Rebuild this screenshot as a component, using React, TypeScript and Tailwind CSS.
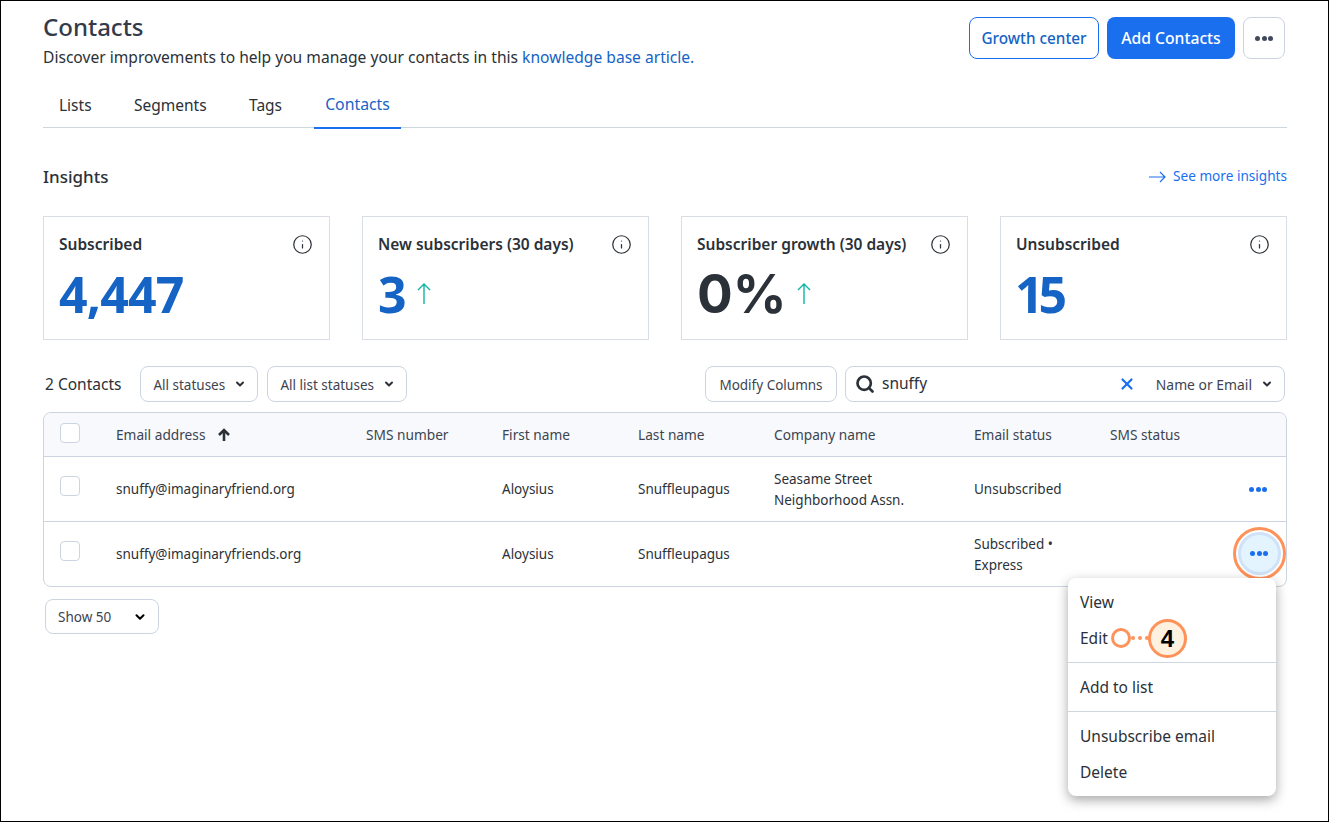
import { ChevronDown, Info, Search, X } from 'lucide-react'

const font = { fontFamily: '"Noto Sans", sans-serif' }

const insights = [
  { title: 'Subscribed', value: '4,447', valueClass: 'text-[50px] text-[#1563c4] tracking-[-0.8px]', arrow: false },
  { title: 'New subscribers (30 days)', value: '3', valueClass: 'text-[50px] text-[#1563c4]', arrow: true },
  { title: 'Subscriber growth (30 days)', value: '0%', valueClass: "font-['Inter'] text-[53px] text-[#2b3138]", arrow: true },
  { title: 'Unsubscribed', value: '15', valueClass: 'text-[50px] -ml-px text-[#1563c4] tracking-[-5px]', arrow: false },
]

const rowGrid = 'grid grid-cols-[56px_250px_136px_136px_136px_200px_136px_1fr] items-center pl-[16px] pr-[19px]'

function Dots({ className }: { className: string }) {
  return (
    <span className={`flex gap-[1.5px] ${className}`}>
      <span className="h-[5px] w-[5px] rounded-full bg-current" />
      <span className="h-[5px] w-[5px] rounded-full bg-current" />
      <span className="h-[5px] w-[5px] rounded-full bg-current" />
    </span>
  )
}

function Checkbox() {
  return <div className="h-5 w-5 rounded-[4px] border border-[#ccd4e2] bg-white" />
}

function Filter({ label, className }: { label: string; className: string }) {
  return (
    <div className={`flex h-9 items-center justify-between rounded-lg border border-[#ccd4e2] pl-[12px] pr-[11px] text-[13.5px] text-[#3d4450] ${className}`}>
      <span className="pt-[2px]">{label}</span>
      <ChevronDown className="h-3 w-3 text-[#2b3138]" strokeWidth={4} />
    </div>
  )
}

function Row({ email, company, status }: { email: string; company: React.ReactNode; status: React.ReactNode }) {
  return (
    <div className={`${rowGrid} h-[65px] border-t border-[#ccd4e2] text-[13.5px] leading-[21px] text-[#2b3138]`}>
      <div className="-mt-[6px]"><Checkbox /></div>
      <div>{email}</div>
      <div />
      <div>Aloysius</div>
      <div>Snuffleupagus</div>
      <div>{company}</div>
      <div>{status}</div>
      <div />
    </div>
  )
}

export default function App() {
  return (
    <div style={font} className="relative h-[822px] w-[1329px] overflow-hidden border border-black bg-white text-[#2b3138]">
      <div className="pl-[42px] pr-[41px]">
        <div className="flex h-[75px] items-start justify-between pt-[15px]">
          <div>
            <h1 className="text-[24px] font-medium leading-[22px] text-[#333b4a]">Contacts</h1>
            <p className="mt-[7px] text-[15.6px] leading-[24px]">
              Discover improvements to help you manage your contacts in this{' '}
              <span className="text-[#1563c4]">knowledge base article.</span>
            </p>
          </div>
          <div className="mr-[2px] mt-px flex gap-2">
            <div className="flex h-[42px] w-[130px] items-center justify-center rounded-lg border border-[#1a6fef] pt-px text-[15.3px] font-medium text-[#1563c4]">Growth center</div>
            <div className="flex h-[42px] w-[128px] items-center justify-center rounded-lg bg-[#1a6fef] pt-px text-[15.7px] font-medium text-white">Add Contacts</div>
            <div className="flex h-[42px] w-[42px] items-center justify-center rounded-lg border border-[#ccd4e2]"><Dots className="text-[#414a5c]" /></div>
          </div>
        </div>

        <div className="flex h-[52px] border-b border-[#ccd6de] pl-[16px] text-[15.5px]">
          <div className="flex h-[52px] w-[75px] items-center pt-[8px]">Lists</div>
          <div className="flex h-[52px] w-[115px] items-center pt-[8px]">Segments</div>
          <div className="flex h-[52px] w-[65px] items-center pt-[8px]">Tags</div>
          <div className="-mb-px flex h-[53px] w-[87px] items-center justify-center border-b-2 border-[#1a6fef] pt-[6px] text-[15.8px] text-[#1563c4]">Contacts</div>
        </div>

        <div className="flex h-[88px] items-center justify-between pt-[10px]">
          <h2 className="text-[17px] font-medium">Insights</h2>
          <div className="flex items-center gap-[7px] text-[13.6px] text-[#1a6fef]">
            <svg width="17" height="12" viewBox="0 0 17 12" fill="none" stroke="currentColor" strokeWidth="1.2">
              <path d="M0 6h16M11 1l5 5-5 5" />
            </svg>
            <span className="-mt-px">See more insights</span>
          </div>
        </div>

        <div className="grid grid-cols-4 gap-8">
          {insights.map(card => (
            <div key={card.title} className="h-[124px] border border-[#d9dde6] px-[15px] pt-[16px]">
              <div className="flex items-center justify-between pr-px">
                <span className="text-[15.5px] font-semibold leading-[22px]">{card.title}</span>
                <Info className="h-[21px] w-[21px]" strokeWidth={1.4} />
              </div>
              <div className="mt-[14px] flex items-center gap-[10px]">
                <span className={`font-bold leading-[50px] ${card.valueClass}`}>{card.value}</span>
                {card.arrow && (
                  <svg width="14" height="21" viewBox="0 0 14 21" fill="none" stroke="#0db5a6" strokeWidth="1.4" className="-mt-[1px]">
                    <path d="M7 21V1M1 7l6-6 6 6" />
                  </svg>
                )}
              </div>
            </div>
          ))}
        </div>

        <div className="mt-[26px] flex h-9 items-center pl-[2px] pr-[2px]">
          <span className="mr-[19px] pt-[2px] text-[15.5px]">2 Contacts</span>
          <Filter label="All statuses" className="w-[118px]" />
          <Filter label="All list statuses" className="ml-[9px] w-[140px]" />
          <div className="ml-auto flex h-9 w-[132px] items-center justify-center rounded-lg border border-[#ccd4e2] pt-[2px] text-[13.5px] text-[#3d4450]">Modify Columns</div>
          <div className="ml-2 flex h-9 w-[440px] items-center rounded-lg border border-[#ccd4e2] pl-[9px] pr-[11px]">
            <Search className="h-[20px] w-[20px]" strokeWidth={3.2} />
            <span className="ml-[7px] text-[15.5px]">snuffy</span>
            <X className="ml-auto h-[18px] w-[18px] text-[#1a6fef]" strokeWidth={3} />
            <span className="ml-[20px] mr-[9px] pt-[2px] text-[13.9px] text-[#3d4450]">Name or Email</span>
            <ChevronDown className="h-3 w-3" strokeWidth={4} />
          </div>
        </div>

        <div className="mt-[10px] h-[175px] rounded-lg border border-[#ccd4e2]">
          <div className={`${rowGrid} h-[43px] rounded-t-lg bg-[#f7f9fc] pt-px text-[13.7px] text-[#3d4450]`}>
            <div className="-mt-[4px]"><Checkbox /></div>
            <div className="flex items-center gap-3">
              Email address
              <svg width="14" height="14" viewBox="0 0 14 14" fill="none" stroke="#2b3138" strokeWidth="2.6">
                <path d="M7 13V2M2 7l5-5 5 5" />
              </svg>
            </div>
            <div>SMS number</div>
            <div>First name</div>
            <div>Last name</div>
            <div>Company name</div>
            <div>Email status</div>
            <div>SMS status</div>
          </div>
          <Row
            email="snuffy@imaginaryfriend.org"
            company={<span className="block pt-[2px]">Seasame Street<br />Neighborhood Assn.</span>}
            status="Unsubscribed"
          />
          <Row
            email="snuffy@imaginaryfriends.org"
            company=""
            status={<span className="block pt-[2px]">Subscribed •<br />Express</span>}
          />
        </div>

        <div className="ml-[2px] mt-[12px] flex h-[35px] w-[114px] items-center justify-between rounded-lg border border-[#ccd4e2] pl-[12px] pr-[11px] text-[13.5px] text-[#3d4450]">
          <span className="pt-[2px]">Show 50</span>
          <ChevronDown className="h-[14px] w-[14px] text-black" strokeWidth={3.5} />
        </div>
      </div>

      {/* row action dots, overlay on the table */}
      <Dots className="absolute left-[1248px] top-[486px] text-[#1a6fef]" />
      <div className="absolute left-[1232px] top-[526px] flex h-[53px] w-[53px] items-center justify-center rounded-full border-[3px] border-[#ff9259] bg-white">
        <div className="flex h-[43px] w-[43px] items-center justify-center rounded-full border-[3px] border-[#cfe2f8] bg-[#e3f4ff]">
          <Dots className="-ml-[1px] text-[#1a6fef]" />
        </div>
      </div>

      <div className="absolute left-[1067px] top-[577px] h-[218px] w-[208px] rounded-lg bg-white text-[15.5px] text-[#2b3138] shadow-[0_4px_12px_rgba(0,0,0,0.35)]">
        <div className="px-3 pb-[5px] pt-[7px]">
          <div className="flex h-9 items-center">View</div>
          <div className="flex h-9 items-center">Edit</div>
        </div>
        <div className="border-t border-[#ccd6de] px-3 pb-[5px] pt-[7px]">
          <div className="flex h-9 items-center">Add to list</div>
        </div>
        <div className="border-t border-[#ccd6de] px-3 py-[7px]">
          <div className="flex h-9 items-center">Unsubscribe email</div>
          <div className="flex h-9 items-center">Delete</div>
        </div>
      </div>

      {/* numbered callout */}
      <div className="absolute left-[1110px] top-[627px] h-[20px] w-[20px] rounded-full border-[3px] border-[#ff9259] bg-white" />
      <div className="absolute left-[1130px] top-[635px] w-[18px] border-t-[4px] border-dotted border-[#ff9259]" />
      <div className="absolute left-[1147px] top-[618px] flex h-[39px] w-[39px] items-center justify-center rounded-full border-[3px] border-[#ff9259] bg-[#fff1e0] text-[24px] font-bold text-black" style={{ fontFamily: '"Liberation Sans", sans-serif' }}>4</div>
    </div>
  )
}
